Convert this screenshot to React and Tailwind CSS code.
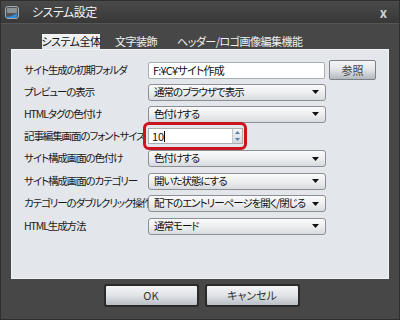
import React from 'react';

const font = { fontFamily: '"Noto Sans CJK JP", "Liberation Sans", sans-serif' };

const Arrow = () => (
  <svg width="7" height="4" viewBox="0 0 7 4" className="shrink-0">
    <path d="M0 0 L7 0 L3.5 4 Z" fill="#111" />
  </svg>
);

const Select = ({ value }) => (
  <div className="w-[178px] h-[17px] flex items-center justify-between pl-[5px] pr-[6px] rounded-[3px] border border-[#8c9096] bg-gradient-to-b from-[#fafafa] via-[#eceef0] to-[#d9dcdf] text-[10.5px] leading-none text-[#111] whitespace-nowrap tracking-[-1px]">
    <span>{value}</span>
    <Arrow />
  </div>
);

const Row = ({ label, h = 'h-[22px]', children }) => (
  <div className={`flex items-center ${h}`}>
    <div className="w-[124px] shrink-0 text-[10.5px] leading-none text-[#1a1a1a] whitespace-nowrap tracking-[-1.1px]">{label}</div>
    {children}
  </div>
);

const BigButton = ({ children, w }) => (
  <div className={`${w} h-[23px] rounded-[2px] border border-[#2a2a2a] p-px bg-[#2a2a2a]`}>
    <div className="h-full rounded-[1px] flex items-center justify-center text-[11px] text-[#333] bg-gradient-to-b from-[#f4f5f7] via-[#e0e3e7] via-50% to-[#b9bfc6]">
      {children}
    </div>
  </div>
);

const TitleIcon = () => (
  <svg width="14" height="13" viewBox="0 0 14 13">
    <rect x="0.5" y="0.5" width="13" height="12" rx="2.5" fill="#4f5357" stroke="#a3a9ae" />
    <rect x="2" y="2" width="10" height="5" rx="1" fill="#8a9197" />
    <path d="M1 11 Q6 11 12 7 L12 10 Q12 12 10 12 L3 12 Q1 12 1 11 Z" fill="#2f8fdc" />
  </svg>
);

export default function App() {
  return (
    <div style={font} className="w-[400px] h-[320px] bg-[#474747] flex flex-col border border-[#2f2f2f] [font-feature-settings:'palt']">
      <div className="h-[23px] flex items-center pl-[4px] pr-[12px] bg-gradient-to-b from-[#4a4a4a] to-[#383838] border-b border-[#555]">
        <TitleIcon />
        <span className="ml-[13px] text-[12px] text-[#f2f2f2] leading-none tracking-[-0.5px]">システム設定</span>
        <span className="ml-auto text-[13px] text-[#cfd3d6] leading-none font-bold">x</span>
      </div>

      <div className="flex-1 flex flex-col px-[10px] pt-[10px]">
        <div className="flex items-end h-[15px] text-[11px] leading-none whitespace-nowrap tracking-[-0.5px]">
          <div className="ml-[31px] w-[58px] h-[15px] flex items-center justify-center bg-gradient-to-b from-[#f4f5f6] to-[#e1e4e8] text-[#111]">
            システム全体
          </div>
          <div className="ml-[15px] h-[15px] flex items-center text-[#f0f0f0]">文字装飾</div>
          <div className="ml-[20px] h-[15px] flex items-center text-[#f0f0f0]">ヘッダー/ロゴ画像編集機能</div>
        </div>

        <div className="h-[230px] border border-[#f2f3f5] bg-[#e3e6ea] px-[12px] pt-[9px] flex flex-col">
          <Row label="サイト生成の初期フォルダ">
            <div className="w-[178px] h-[17px] flex items-center pl-[4px] bg-white border border-[#a9adb2] rounded-[2px] text-[11px] leading-none text-[#111] tracking-[-0.8px]">
              F:¥C¥サイト作成
            </div>
            <div className="ml-[4px] w-[47px] h-[20px] rounded-[2px] border border-[#7d8187] flex items-center justify-center text-[11px] text-[#444] bg-gradient-to-b from-[#f5f6f7] via-[#e1e4e7] to-[#b3b9c0]">
              参照
            </div>
          </Row>
          <Row label="プレビューの表示">
            <Select value="通常のブラウザで表示" />
          </Row>
          <Row label="HTMLタグの色付け">
            <Select value="色付けする" />
          </Row>
          <Row label="記事編集画面のフォントサイズ">
            <div className="relative">
              <div className="absolute -left-[5px] -right-[4px] -top-[6px] -bottom-[6px] border-[3px] border-[#cc1420] rounded-[6px]" />
              <div className="w-[95px] h-[16px] flex items-center bg-white border border-[#a9adb2] text-[11px] leading-none text-[#111]">
                <span className="pl-[3px]">10</span>
                <span className="w-px h-[11px] bg-black" />
                <div className="ml-auto w-[10px] h-full flex flex-col border-l border-[#c4c8cc] bg-gradient-to-b from-[#f3f4f6] to-[#d6dade]">
                  <div className="flex-1 flex items-center justify-center">
                    <svg width="5" height="3" viewBox="0 0 5 3"><path d="M0 3 L2.5 0 L5 3 Z" fill="#5a7fa8" /></svg>
                  </div>
                  <div className="flex-1 flex items-center justify-center">
                    <svg width="5" height="3" viewBox="0 0 5 3"><path d="M0 0 L5 0 L2.5 3 Z" fill="#5a7fa8" /></svg>
                  </div>
                </div>
              </div>
            </div>
          </Row>
          <Row label="サイト構成画面の色付け" h="h-[23px]">
            <Select value="色付けする" />
          </Row>
          <Row label="サイト構成画面のカテゴリー">
            <Select value="開いた状態にする" />
          </Row>
          <Row label="カテゴリーのダブルクリック操作" h="h-[23px]">
            <Select value="配下のエントリーページを開く/閉じる" />
          </Row>
          <Row label="HTML生成方法">
            <Select value="通常モード" />
          </Row>
        </div>

        <div className="flex justify-center gap-[6px] mt-[5px] pl-[3px]">
          <BigButton w="w-[95px]">OK</BigButton>
          <BigButton w="w-[95px]">キャンセル</BigButton>
        </div>
      </div>
    </div>
  );
}
